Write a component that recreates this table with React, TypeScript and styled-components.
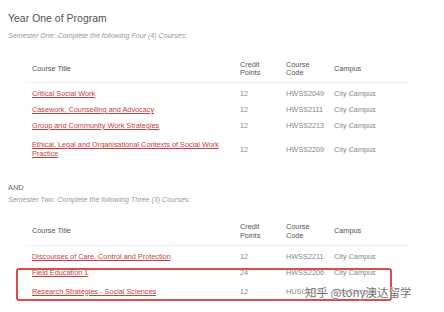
import React from "react";
import styled, { createGlobalStyle } from "styled-components";

const Global = createGlobalStyle`
  html, body { margin: 0; padding: 0; background: #fff; }
  body { font-family: "Liberation Sans", Arial, sans-serif; }
`;

const Page = styled.div`
  position: relative;
  width: 444px;
  height: 312px;
  overflow: hidden;
  box-sizing: border-box;
  padding: 13px 8px 0 8px;
  background: #fff;
`;

const Title = styled.h2`
  margin: 0;
  font-size: 10.4px;
  line-height: 12px;
  font-weight: normal;
  color: #505050;
  letter-spacing: 0.05px;
`;

const Sub = styled.p<{ $mt: number }>`
  margin: ${(p) => p.$mt}px 0 0 0;
  font-size: 7.1px;
  line-height: 9px;
  font-style: italic;
  color: #999;
`;

const And = styled.p`
  margin: 21.5px 0 0 0;
  font-size: 7.4px;
  line-height: 9px;
  color: #666;
`;

const TableWrap = styled.div<{ $mt: number }>`
  position: relative;
  margin: ${(p) => p.$mt}px 0 0 17px;
  width: 383px;
`;

const Table = styled.table`
  width: 383px;
  table-layout: fixed;
  border-collapse: collapse;
  font-size: 7.3px;
  line-height: 9px;
`;

const Th = styled.th<{ $w: number; $first?: boolean }>`
  width: ${(p) => p.$w}px;
  padding: 4px 0 4.5px ${(p) => (p.$first ? 7 : 0)}px;
  text-align: left;
  font-weight: normal;
  color: #555;
  line-height: 8.5px;
  vertical-align: middle;
  border-bottom: 1px solid #eee;
`;

const Tr = styled.tr`
  & > td { padding-top: 3.5px; }
  &:first-child > td { padding-top: 6px; }
  &:last-child > td { padding-top: 6.5px; }
`;

const Td = styled.td<{ $first?: boolean }>`
  padding: 3.5px 0 3.5px ${(p) => (p.$first ? 7 : 0)}px;
  padding-right: ${(p) => (p.$first ? 14 : 0)}px;
  color: #888888;
  vertical-align: middle;
`;

const Link = styled.a`
  color: #c8413d;
  text-decoration: underline;
  text-underline-offset: 1px;
`;

const Highlight = styled.div`
  position: absolute;
  left: -9px;
  top: 48.5px;
  width: 376px;
  height: 33px;
  box-sizing: border-box;
  border: 2px solid #de4b48;
  border-radius: 3px;
  pointer-events: none;
`;

const Watermark = styled.div`
  position: absolute;
  left: 305px;
  top: 284px;
  font-family: "Noto Sans CJK SC", "Liberation Sans", sans-serif;
  font-size: 11.5px;
  line-height: 16px;
  color: rgba(60, 60, 60, 0.75);
  text-shadow: 0 0 2px #fff, 0 0 1px #fff;
  white-space: nowrap;
`;

type Course = { title: string; cp: string; code: string; campus: string };

const sem1: Course[] = [
  { title: "Critical Social Work", cp: "12", code: "HWSS2049", campus: "City Campus" },
  { title: "Casework, Counselling and Advocacy", cp: "12", code: "HWSS2111", campus: "City Campus" },
  { title: "Group and Community Work Strategies", cp: "12", code: "HWSS2213", campus: "City Campus" },
  {
    title: "Ethical, Legal and Organisational Contexts of Social Work Practice",
    cp: "12",
    code: "HWSS2209",
    campus: "City Campus",
  },
];

const sem2: Course[] = [
  { title: "Discourses of Care, Control and Protection", cp: "12", code: "HWSS2211", campus: "City Campus" },
  { title: "Field Education 1", cp: "24", code: "HWSS2206", campus: "City Campus" },
  { title: "Research Strategies - Social Sciences", cp: "12", code: "HUSC2001", campus: "City Campus" },
];

const CourseTable: React.FC<{ rows: Course[] }> = ({ rows }) => (
  <Table>
    <thead>
      <tr>
        <Th $w={208} $first>Course Title</Th>
        <Th $w={46}>Credit<br />Points</Th>
        <Th $w={48}>Course<br />Code</Th>
        <Th $w={74}>Campus</Th>
      </tr>
    </thead>
    <tbody>
      {rows.map((r) => (
        <Tr key={r.code}>
          <Td $first>
            <Link href="#">{r.title}</Link>
          </Td>
          <Td>{r.cp}</Td>
          <Td>{r.code}</Td>
          <Td>{r.campus}</Td>
        </Tr>
      ))}
    </tbody>
  </Table>
);

export default function App() {
  return (
    <>
      <Global />
      <Page>
        <Title>Year One of Program</Title>
        <Sub $mt={6.5}>Semester One: Complete the following Four (4) Courses:</Sub>
        <TableWrap $mt={16}>
          <CourseTable rows={sem1} />
        </TableWrap>
        <And>AND</And>
        <Sub $mt={4}>Semester Two: Complete the following Three (3) Courses:</Sub>
        <TableWrap $mt={14}>
          <CourseTable rows={sem2} />
          <Highlight />
        </TableWrap>
        <Watermark>知乎 @tony澳达留学</Watermark>
      </Page>
    </>
  );
}
